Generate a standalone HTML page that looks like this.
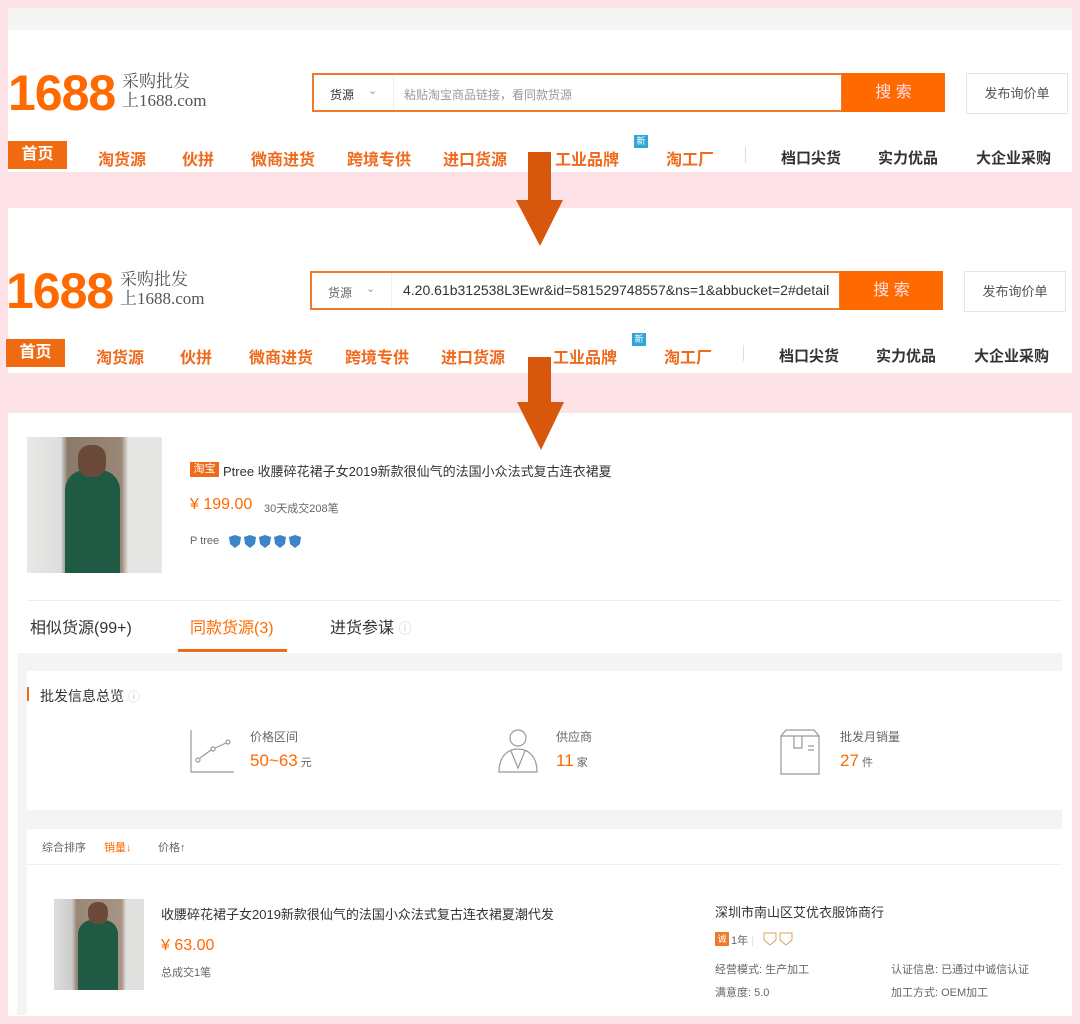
<!DOCTYPE html>
<html><head><meta charset="utf-8"><style>
*{margin:0;padding:0;box-sizing:border-box}
body{width:1080px;height:1024px;background:#fde3e7;position:relative;overflow:hidden;font-family:"Liberation Sans","Noto Sans CJK SC",sans-serif;color:#333}
.a{position:absolute;white-space:nowrap}
.panel{position:absolute;background:#fff}
.hdr{position:absolute;left:0;width:1080px;height:180px}
.logo{font-size:50px;font-weight:bold;color:#ff6a00;letter-spacing:-1px;font-family:"Liberation Sans",sans-serif}
.hand{font-family:"Liberation Serif","Noto Serif CJK SC",serif;color:#555;font-size:17px;line-height:19px}
.nav{font-size:16px;font-weight:bold;color:#ef6a1d}
.nav2{font-size:15px;font-weight:bold;color:#333}
.o{color:#ff6a00}
.g{color:#999}
</style></head><body>

<!-- panel 1 -->
<div class="panel" style="left:8px;top:8px;width:1064px;height:164px"></div>
<div class="a" style="left:8px;top:8px;width:1064px;height:22px;background:#f5f5f5"></div>

<div class="hdr" style="top:0">
 <div class="a logo" style="left:8px;top:64px">1688</div>
 <div class="a hand" style="left:122px;top:72px">采购批发<br>上1688.com</div>
 <div class="a" style="left:312px;top:73px;width:531px;height:39px;border:2px solid #f07a2a;background:#fff"></div>
 <div class="a" style="left:330px;top:86px;font-size:12px;color:#333">货源</div>
 <div class="a" style="left:368px;top:84px;font-size:11px;color:#999">⌄</div>
 <div class="a" style="left:393px;top:75px;width:1px;height:35px;background:#eee"></div>
 <div class="a" style="left:404px;top:86px;font-size:12px;color:#999">粘贴淘宝商品链接，看同款货源</div>
 <div class="a" style="left:842px;top:73px;width:103px;height:39px;background:#ff6a00;color:#fde;font-size:16px;text-align:center;line-height:39px">搜 索</div>
 <div class="a" style="left:966px;top:73px;width:102px;height:41px;border:1px solid #e5e5e5;font-size:13px;color:#555;text-align:center;line-height:39px">发布询价单</div>
 <div class="a" style="left:8px;top:141px;width:59px;height:28px;background:#f06a12;color:#fff;font-size:16px;font-weight:bold;text-align:center;line-height:28px">首页</div>
 <div class="a nav" style="left:98px;top:146px">淘货源</div>
 <div class="a nav" style="left:182px;top:146px">伙拼</div>
 <div class="a nav" style="left:251px;top:146px">微商进货</div>
 <div class="a nav" style="left:347px;top:146px">跨境专供</div>
 <div class="a nav" style="left:443px;top:146px">进口货源</div>
 <div class="a nav" style="left:555px;top:146px">工业品牌</div>
 <div class="a" style="left:634px;top:135px;width:14px;height:13px;background:#2ea7d8;color:#fff;font-size:9px;text-align:center;line-height:13px">新</div>
 <div class="a nav" style="left:666px;top:146px">淘工厂</div>
 <div class="a" style="left:745px;top:147px;width:1px;height:16px;background:#ddd"></div>
 <div class="a nav2" style="left:781px;top:147px">档口尖货</div>
 <div class="a nav2" style="left:878px;top:147px">实力优品</div>
 <div class="a nav2" style="left:976px;top:147px">大企业采购</div>
</div>

<!-- panel 2 -->
<div class="panel" style="left:8px;top:208px;width:1064px;height:165px"></div>
<div class="hdr" style="top:198px;left:-2px">
 <div class="a logo" style="left:8px;top:64px">1688</div>
 <div class="a hand" style="left:122px;top:72px">采购批发<br>上1688.com</div>
 <div class="a" style="left:312px;top:73px;width:531px;height:39px;border:2px solid #f07a2a;background:#fff"></div>
 <div class="a" style="left:330px;top:86px;font-size:12px;color:#666">货源</div>
 <div class="a" style="left:368px;top:84px;font-size:11px;color:#999">⌄</div>
 <div class="a" style="left:393px;top:75px;width:1px;height:35px;background:#eee"></div>
 <div class="a" style="left:405px;top:84px;font-size:14px;color:#333">4.20.61b312538L3Ewr&amp;id=581529748557&amp;ns=1&amp;abbucket=2#detail</div>
 <div class="a" style="left:842px;top:73px;width:103px;height:39px;background:#ff6a00;color:#fde;font-size:16px;text-align:center;line-height:39px">搜 索</div>
 <div class="a" style="left:966px;top:73px;width:102px;height:41px;border:1px solid #e5e5e5;font-size:13px;color:#555;text-align:center;line-height:39px">发布询价单</div>
 <div class="a" style="left:8px;top:141px;width:59px;height:28px;background:#f06a12;color:#fff;font-size:16px;font-weight:bold;text-align:center;line-height:28px">首页</div>
 <div class="a nav" style="left:98px;top:146px">淘货源</div>
 <div class="a nav" style="left:182px;top:146px">伙拼</div>
 <div class="a nav" style="left:251px;top:146px">微商进货</div>
 <div class="a nav" style="left:347px;top:146px">跨境专供</div>
 <div class="a nav" style="left:443px;top:146px">进口货源</div>
 <div class="a nav" style="left:555px;top:146px">工业品牌</div>
 <div class="a" style="left:634px;top:135px;width:14px;height:13px;background:#2ea7d8;color:#fff;font-size:9px;text-align:center;line-height:13px">新</div>
 <div class="a nav" style="left:666px;top:146px">淘工厂</div>
 <div class="a" style="left:745px;top:147px;width:1px;height:16px;background:#ddd"></div>
 <div class="a nav2" style="left:781px;top:147px">档口尖货</div>
 <div class="a nav2" style="left:878px;top:147px">实力优品</div>
 <div class="a nav2" style="left:976px;top:147px">大企业采购</div>
</div>

<!-- panel 3 -->
<div class="panel" style="left:8px;top:413px;width:1064px;height:603px"></div>
<div class="a" style="left:27px;top:437px;width:135px;height:136px;background:linear-gradient(90deg,#e8e8e6 0,#ddd 25%,#8a7a6a 30%,#9b8877 70%,#e6e6e4 75%)"></div>
<div class="a" style="left:65px;top:470px;width:55px;height:103px;background:#1f5a45;border-radius:20px 20px 0 0"></div>
<div class="a" style="left:78px;top:445px;width:28px;height:32px;background:#6b4a3a;border-radius:12px"></div>
<div class="a" style="left:190px;top:462px;width:29px;height:15px;background:#ef6b1a;color:#fff;font-size:11px;text-align:center;line-height:15px">淘宝</div>
<div class="a" style="left:223px;top:461px;font-size:13px;color:#333">Ptree 收腰碎花裙子女2019新款很仙气的法国小众法式复古连衣裙夏</div>
<div class="a o" style="left:190px;top:496px;font-size:16px">¥ 199.00</div>
<div class="a" style="left:264px;top:500px;font-size:11px;color:#666">30天成交208笔</div>
<div class="a" style="left:190px;top:535px;font-size:11px;color:#666">P tree</div>
<svg class="a" style="left:227px;top:534px" width="80" height="15"><g fill="#3a86c8"><path d="M2 3 8 1 14 3 13 10 8 14 3 10Z"/><path d="M17 3 23 1 29 3 28 10 23 14 18 10Z"/><path d="M32 3 38 1 44 3 43 10 38 14 33 10Z"/><path d="M47 3 53 1 59 3 58 10 53 14 48 10Z"/><path d="M62 3 68 1 74 3 73 10 68 14 63 10Z"/></g></svg>
<div class="a" style="left:27px;top:600px;width:1035px;height:1px;background:#eee"></div>
<div class="a" style="left:30px;top:614px;font-size:16px;color:#333">相似货源(99+)</div>
<div class="a o" style="left:190px;top:614px;font-size:16px">同款货源(3)</div>
<div class="a" style="left:330px;top:614px;font-size:16px;color:#333">进货参谋 <span style="color:#ccc;font-size:13px">ⓘ</span></div>
<div class="a" style="left:178px;top:649px;width:109px;height:3px;background:#ef6b1a"></div>
<div class="a" style="left:17px;top:653px;width:1045px;height:362px;background:#f4f4f5"></div>
<div class="a" style="left:27px;top:671px;width:1035px;height:139px;background:#fff"></div>
<div class="a" style="left:27px;top:687px;width:2px;height:14px;background:#ef6b1a"></div>
<div class="a" style="left:40px;top:686px;font-size:14px;color:#333">批发信息总览 <span style="color:#ccc;font-size:12px">ⓘ</span></div>
<svg class="a" style="left:188px;top:728px" width="50" height="46" fill="none" stroke="#999" stroke-width="1.2"><path d="M3 2V44H46"/><circle cx="10" cy="32" r="2"/><circle cx="25" cy="21" r="2"/><circle cx="40" cy="14" r="2"/><path d="M12 30 23 22M27 20 38 15"/></svg>
<div class="a" style="left:250px;top:728px;font-size:12px;color:#666">价格区间</div>
<div class="a o" style="left:250px;top:751px;font-size:17px">50~63<span style="font-size:11px;color:#666"> 元</span></div>
<svg class="a" style="left:496px;top:728px" width="44" height="46" fill="none" stroke="#999" stroke-width="1.2"><circle cx="22" cy="10" r="8"/><path d="M3 44C3 28 12 21 22 21S41 28 41 44ZM15 23 22 40 29 23"/></svg>
<div class="a" style="left:556px;top:728px;font-size:12px;color:#666">供应商</div>
<div class="a o" style="left:556px;top:751px;font-size:17px">11<span style="font-size:11px;color:#666"> 家</span></div>
<svg class="a" style="left:778px;top:728px" width="44" height="48" fill="none" stroke="#999" stroke-width="1.2"><path d="M3 8 8 2H36L41 8V46H3ZM3 8H41M16 8V20H24V8M30 18H36M30 22H36"/></svg>
<div class="a" style="left:840px;top:728px;font-size:12px;color:#666">批发月销量</div>
<div class="a o" style="left:840px;top:751px;font-size:17px">27<span style="font-size:11px;color:#666"> 件</span></div>
<div class="a" style="left:27px;top:829px;width:1035px;height:186px;background:#fff"></div>
<div class="a" style="left:27px;top:864px;width:1035px;height:1px;background:#f0f0f0"></div>
<div class="a" style="left:42px;top:839px;font-size:11px;color:#666">综合排序</div>
<div class="a o" style="left:104px;top:839px;font-size:11px">销量↓</div>
<div class="a" style="left:158px;top:839px;font-size:11px;color:#666">价格↑</div>
<div class="a" style="left:54px;top:899px;width:90px;height:91px;background:linear-gradient(90deg,#ddd 0,#ccc 20%,#9a8775 25%,#a89482 75%,#e0e0df 80%)"></div>
<div class="a" style="left:78px;top:920px;width:40px;height:70px;background:#1f5a45;border-radius:14px 14px 0 0"></div>
<div class="a" style="left:88px;top:902px;width:20px;height:22px;background:#6b4a3a;border-radius:9px"></div>
<div class="a" style="left:161px;top:904px;font-size:13px;color:#333">收腰碎花裙子女2019新款很仙气的法国小众法式复古连衣裙夏潮代发</div>
<div class="a o" style="left:161px;top:937px;font-size:16px">¥ 63.00</div>
<div class="a" style="left:161px;top:964px;font-size:11px;color:#666">总成交1笔</div>
<div class="a" style="left:715px;top:902px;font-size:13px;color:#333">深圳市南山区艾优衣服饰商行</div>
<div class="a" style="left:715px;top:932px;width:14px;height:14px;background:#ef7a2a;color:#fff;font-size:9px;text-align:center;line-height:14px">诚</div>
<div class="a" style="left:731px;top:932px;font-size:11px;color:#666">1年 <span style="color:#ddd">|</span></div>
<svg class="a" style="left:762px;top:931px" width="34" height="16" fill="#fff" stroke="#d9a35a" stroke-width="1"><path d="M2 2H14V9L8 14 2 9Z"/><path d="M18 2H30V9L24 14 18 9Z"/></svg>
<div class="a" style="left:715px;top:961px;font-size:11px;color:#666">经营模式: 生产加工</div>
<div class="a" style="left:891px;top:961px;font-size:11px;color:#666">认证信息: 已通过中诚信认证</div>
<div class="a" style="left:715px;top:984px;font-size:11px;color:#666">满意度: 5.0</div>
<div class="a" style="left:891px;top:984px;font-size:11px;color:#666">加工方式: OEM加工</div>

<!-- arrows -->
<svg class="a" style="left:0;top:0" width="1080" height="1024"><path d="M528 152H551V200H563L540 246 516 200H528Z" fill="#d7570c"/><path d="M528 357H551V402H564L541 450 517 402H528Z" fill="#d7570c"/></svg>
</body></html>
